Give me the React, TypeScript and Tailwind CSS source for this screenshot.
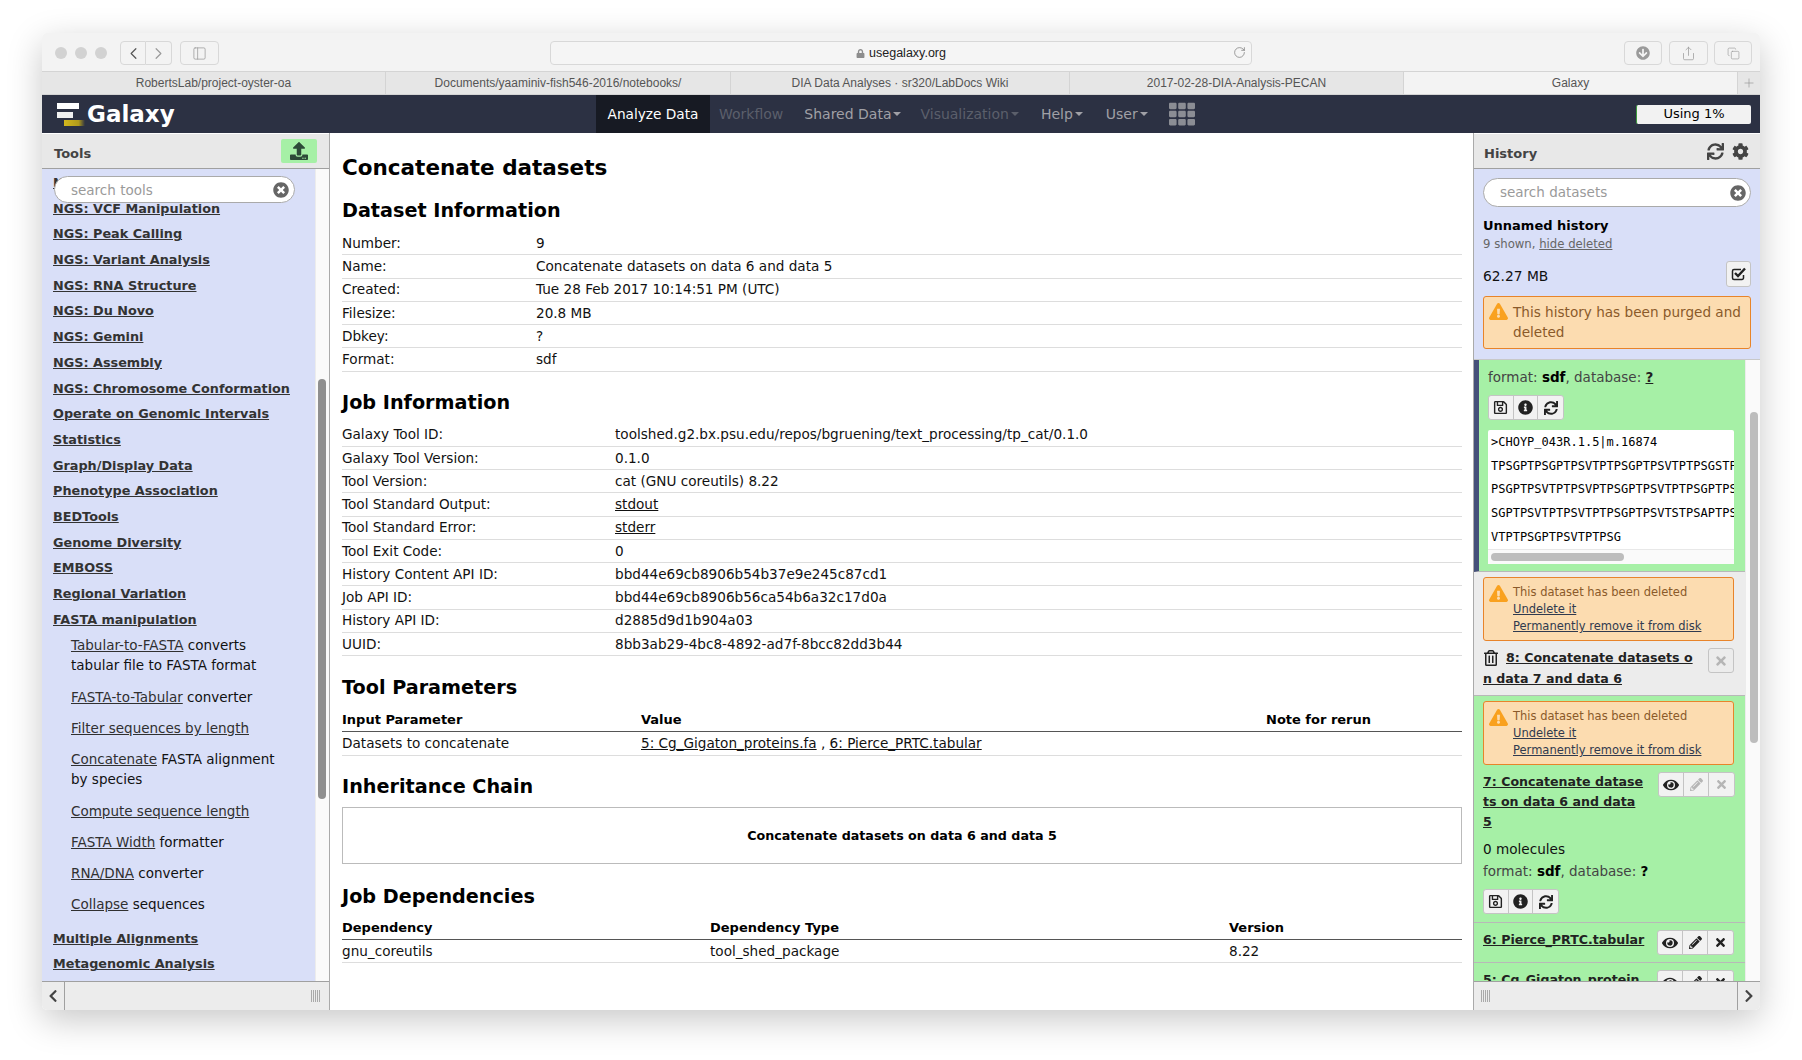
import React from 'react';
import {
  FaCog, FaChevronLeft, FaChevronRight, FaEye, FaExclamationTriangle, FaInfoCircle, FaLock,
  FaPencilAlt, FaRegSave, FaRegTrashAlt, FaSync, FaTh, FaTimes, FaTimesCircle,
  FaArrowCircleDown, FaUpload,
} from 'react-icons/fa';
import { ChevronLeft, ChevronRight, Copy, PanelLeft, Plus, RotateCw, Share } from 'lucide-react';

const sections = [
  'NGS: SAM Tools', 'NGS: VCF Manipulation', 'NGS: Peak Calling', 'NGS: Variant Analysis', 'NGS: RNA Structure',
  'NGS: Du Novo', 'NGS: Gemini', 'NGS: Assembly', 'NGS: Chromosome Conformation', 'Operate on Genomic Intervals',
  'Statistics', 'Graph/Display Data', 'Phenotype Association', 'BEDTools', 'Genome Diversity', 'EMBOSS',
  'Regional Variation', 'FASTA manipulation',
];

const fastaTools = [
  ['Tabular-to-FASTA', ' converts tabular file to FASTA format'],
  ['FASTA-to-Tabular', ' converter'],
  ['Filter sequences by length', ''],
  ['Concatenate', ' FASTA alignment by species'],
  ['Compute sequence length', ''],
  ['FASTA Width', ' formatter'],
  ['RNA/DNA', ' converter'],
  ['Collapse', ' sequences'],
];

const tabs = [
  { label: 'RobertsLab/project-oyster-oa', w: 'w-[344px]' },
  { label: 'Documents/yaaminiv-fish546-2016/notebooks/', w: 'w-[345px]' },
  { label: 'DIA Data Analyses · sr320/LabDocs Wiki', w: 'w-[339px]' },
  { label: '2017-02-28-DIA-Analysis-PECAN', w: 'w-[334px]' },
];

const datasetInfo = [
  ['Number:', '9'],
  ['Name:', 'Concatenate datasets on data 6 and data 5'],
  ['Created:', 'Tue 28 Feb 2017 10:14:51 PM (UTC)'],
  ['Filesize:', '20.8 MB'],
  ['Dbkey:', '?'],
  ['Format:', 'sdf'],
];

const jobInfo = [
  ['Galaxy Tool ID:', 'toolshed.g2.bx.psu.edu/repos/bgruening/text_processing/tp_cat/0.1.0'],
  ['Galaxy Tool Version:', '0.1.0'],
  ['Tool Version:', 'cat (GNU coreutils) 8.22'],
  ['Tool Standard Output:', 'stdout'],
  ['Tool Standard Error:', 'stderr'],
  ['Tool Exit Code:', '0'],
  ['History Content API ID:', 'bbd44e69cb8906b54b37e9e245c87cd1'],
  ['Job API ID:', 'bbd44e69cb8906b56ca54b6a32c17d0a'],
  ['History API ID:', 'd2885d9d1b904a03'],
  ['UUID:', '8bb3ab29-4bc8-4892-ad7f-8bcc82dd3b44'],
];

const sequence = [
  '>CHOYP_043R.1.5|m.16874',
  'TPSGPTPSGPTPSVTPTPSGPTPSVTPTPSGSTPSGPTPS',
  'PSGPTPSVTPTPSVPTPSGPTPSVTPTPSGPTPSVTPTPS',
  'SGPTPSVTPTPSVTPTPSGPTPSVTSTPSAPTPSGPTPSV',
  'VTPTPSGPTPSVTPTPSG',
];

const BarButton = ({ className, children }: { className: string; children?: React.ReactNode }) => (
  <div className={`h-[24px] flex items-center justify-center border border-[#d8d8d8] rounded-[4px] text-[#9a9a9a] ${className}`}>
    {children}
  </div>
);

const DeletedWarning = () => (
  <div className="mx-[9px] w-[251px] h-[64px] flex gap-[5px] border border-[#e8842a] rounded-[3px] bg-[#fcdcb0] pl-[5px] pt-[6px] text-[11.5px] leading-[17px] text-[#8a5a2a]">
    <FaExclamationTriangle className="w-[19px] h-[19px] text-[#f9a11f] shrink-0" />
    <div>
      <div>This dataset has been deleted</div>
      <div className="underline text-[#303a4f]">Undelete it</div>
      <div className="underline text-[#303a4f]">Permanently remove it from disk</div>
    </div>
  </div>
);

const IconGroup = ({ children }: { children: React.ReactNode }) => (
  <div className="flex h-[25px] rounded-[3px] border border-[#c4c4c4] bg-[#f2f2f2] divide-x divide-[#c4c4c4] text-[#222222]">
    {children}
  </div>
);

const IconCell = ({ children, muted }: { children: React.ReactNode; muted?: boolean }) => (
  <div className={`w-[25px] flex items-center justify-center ${muted ? 'text-[#b5b5b5]' : ''}`}>{children}</div>
);

const InfoRow = ({ label, value, labelW }: { label: string; value: string; labelW: string }) => (
  <div className="flex h-[23.25px] items-center border-b border-[#dddddd]">
    <div className={`${labelW} shrink-0`}>{label}</div>
    <div className={value === 'stdout' || value === 'stderr' ? 'underline' : ''}>{value}</div>
  </div>
);

const Heading = ({ children, className }: { children: React.ReactNode; className: string }) => (
  <h2 className={`text-[19.2px] leading-[26px] font-bold text-black ${className}`}>{children}</h2>
);

const Caret = ({ className }: { className: string }) => (
  <i className={`ml-[2px] border-x-[4px] border-x-transparent border-t-[4px] ${className}`} />
);

export default function App() {
  return (
    <div className="w-[1802px] h-[1060px] bg-white pt-[33px] px-[42px] overflow-hidden font-['DejaVu_Sans',sans-serif] text-[13.6px] text-[#111111]">
      <div className="w-[1718px] h-[977px] flex flex-col rounded-[5px] overflow-hidden shadow-[0_10px_35px_rgba(0,0,0,0.22)]">
        {/* safari chrome */}
        <div className="h-[39px] shrink-0 flex items-center bg-[#f3f3f3] border-b border-[#d4d4d4] pl-[13px] pt-[2px]">
          <div className="flex gap-[8px]">
            <div className="w-[12px] h-[12px] rounded-full bg-[#d2d2d2]" />
            <div className="w-[12px] h-[12px] rounded-full bg-[#d2d2d2]" />
            <div className="w-[12px] h-[12px] rounded-full bg-[#d2d2d2]" />
          </div>
          <BarButton className="w-[26px] ml-[13px] rounded-r-none text-[#555555]"><ChevronLeft size={19} strokeWidth={1.5} /></BarButton>
          <BarButton className="w-[26px] rounded-l-none border-l-0"><ChevronRight size={19} strokeWidth={1.5} /></BarButton>
          <BarButton className="w-[39px] ml-[8px]"><PanelLeft size={15} strokeWidth={1.2} /></BarButton>
          <div className="relative w-[702px] h-[24px] ml-[331px] flex items-center justify-center border border-[#d8d8d8] rounded-[4px] bg-[#f5f5f5] font-['Liberation_Sans',sans-serif] text-[12.5px] text-[#222222]">
            <FaLock className="w-[9px] h-[9px] mr-[4px] text-[#8d8d8d]" />
            usegalaxy.org
            <RotateCw size={13} strokeWidth={1.3} className="absolute right-[5px] top-[4px] text-[#777777]" />
          </div>
          <BarButton className="w-[38px] ml-[372px]"><FaArrowCircleDown className="w-[14px] h-[14px]" /></BarButton>
          <BarButton className="w-[39px] ml-[7px]"><Share size={15} strokeWidth={1.2} /></BarButton>
          <BarButton className="w-[38px] ml-[6px]"><Copy size={13} strokeWidth={1.2} /></BarButton>
        </div>
        <div className="h-[23px] shrink-0 flex bg-[#e6e6e6] border-b border-[#d4d4d4] font-['Liberation_Sans',sans-serif] text-[12px] text-[#555555]">
          {tabs.map((t) => (
            <div key={t.label} className={`${t.w} flex items-center justify-center border-r border-[#d4d4d4]`}>{t.label}</div>
          ))}
          <div className="w-[333px] flex items-center justify-center bg-[#f3f3f3]">Galaxy</div>
          <div className="flex-1 flex items-center justify-center border-l border-[#d4d4d4] text-[#8a8a8a]"><Plus size={14} strokeWidth={1} /></div>
        </div>

        {/* galaxy masthead */}
        <div className="h-[38px] shrink-0 flex items-center bg-[#2c3143] text-[14px]">
          <svg width="30" height="26" viewBox="0 0 30 26" className="ml-[15px]">
            <defs>
              <linearGradient id="logoGold" x1="0" x2="1" y1="0" y2="0">
                <stop offset="0" stopColor="#d4b81c" />
                <stop offset="0.7" stopColor="#b09a1c" />
                <stop offset="1" stopColor="#2c3143" />
              </linearGradient>
            </defs>
            <rect x="0" y="2" width="22" height="6" fill="#ffffff" />
            <rect x="0" y="11" width="16" height="6" fill="#f0f0f0" />
            <rect x="7" y="19" width="21" height="6" fill="url(#logoGold)" />
          </svg>
          <span className="w-[509px] text-[23px] leading-none font-bold text-white">Galaxy</span>
          <div className="w-[114px] h-full flex items-center justify-center bg-[#171a23] text-[13.7px] text-white">Analyze Data</div>
          <span className="ml-[9px] text-[#5b5f6b]">Workflow</span>
          <span className="ml-[21px] text-[#a0a0a6] flex items-center">Shared Data<Caret className="border-t-[#a0a0a6]" /></span>
          <span className="ml-[19px] text-[#5b5f6b] flex items-center">Visualization<Caret className="border-t-[#5b5f6b]" /></span>
          <span className="ml-[22px] text-[#a0a0a6] flex items-center">Help<Caret className="border-t-[#a0a0a6]" /></span>
          <span className="ml-[23px] text-[#a0a0a6] flex items-center">User<Caret className="border-t-[#a0a0a6]" /></span>
          <FaTh className="ml-[21px] w-[26px] h-[26px] text-[#8b8d94]" />
          <div className="ml-auto mr-[9px] w-[115px] h-[19px] flex items-center justify-center bg-[#f2f2f2] border-l border-l-[#3c9a3c] rounded-[2px] text-[13px] text-black">Using 1%</div>
        </div>

        {/* three panels */}
        <div className="flex-1 min-h-0 flex">
          {/* tools */}
          <div className="w-[288px] shrink-0 flex flex-col border-r border-[#aaaaaa]">
            <div className="h-[36px] shrink-0 flex items-center justify-between bg-[#e8e8e8] border-t border-t-white border-b border-b-[#a0a0a0] pl-[12px] pr-[12px] text-[13px]">
              <span className="font-bold text-[#444444] pt-[5px]">Tools</span>
              <div className="w-[36px] h-[24px] flex items-center justify-center rounded-[2px] bg-[#a6f0a6] text-[#2d4a38]">
                <FaUpload className="w-[18px] h-[18px]" />
              </div>
            </div>
            <div className="relative flex-1 min-h-0 flex overflow-hidden">
              <div className="w-[273px] bg-[#d9dff8] pl-[11px] pt-[1px] overflow-hidden">
                {sections.map((s) => (
                  <div key={s} className="h-[25.7px] leading-[25px] text-[12.8px] font-bold underline text-[#333333] whitespace-nowrap">{s}</div>
                ))}
                <div className="pl-[18px] pr-[30px] pt-[3px] text-[13.5px]">
                  {fastaTools.map(([a, b]) => (
                    <div key={a} className="leading-[20px] mb-[11.3px] text-[#111111]"><span className="underline text-[#303030]">{a}</span>{b}</div>
                  ))}
                </div>
                <div className="h-[25.7px] leading-[25px] text-[12.8px] font-bold underline text-[#333333]">Multiple Alignments</div>
                <div className="h-[25.7px] leading-[25px] text-[12.8px] font-bold underline text-[#333333]">Metagenomic Analysis</div>
              </div>
              <div className="flex-1 bg-[#fafafa] border-l border-[#ececec] pt-[210px] pl-[2px]">
                <div className="w-[8px] h-[420px] rounded-[4px] bg-[#8f8f8f]" />
              </div>
              <div className="absolute left-[12px] top-[7px] w-[241px] h-[27px] flex items-center justify-between rounded-[14px] border border-[#aaaaaa] bg-white pl-[16px] pr-[5px] text-[13.5px] text-[#9a9a9a]">
                <span className="pt-[1px]">search tools</span>
                <FaTimesCircle className="w-[16px] h-[16px] text-[#666666]" />
              </div>
            </div>
            <div className="h-[29px] shrink-0 flex items-center bg-[#ececec] border-t border-[#a0a0a0]">
              <div className="w-[23px] h-full flex items-center justify-center border-r border-[#a0a0a0] text-[#444444]"><FaChevronLeft className="w-[14px] h-[14px]" /></div>
              <div className="ml-auto mr-[9px] w-[9px] h-[12px] bg-[repeating-linear-gradient(90deg,#aaaaaa_0,#aaaaaa_1px,transparent_1px,transparent_2px)]" />
            </div>
          </div>

          {/* center */}
          <div className="flex-1 min-w-0 bg-white pl-[12px] pr-[11px] pt-[19px] overflow-hidden">
            <h1 className="text-[21.5px] leading-[32px] font-bold text-black">Concatenate datasets</h1>
            <Heading className="mt-[14px]">Dataset Information</Heading>
            <div className="mt-[8px]">
              {datasetInfo.map(([k, v]) => <InfoRow key={k} label={k} value={v} labelW="w-[194px]" />)}
            </div>
            <Heading className="mt-[18px]">Job Information</Heading>
            <div className="mt-[8px]">
              {jobInfo.map(([k, v]) => <InfoRow key={k} label={k} value={v} labelW="w-[273px]" />)}
            </div>
            <Heading className="mt-[19px]">Tool Parameters</Heading>
            <div className="mt-[8px]">
              <div className="flex h-[23.25px] items-center border-b border-[#555555] text-[13px] font-bold text-black">
                <div className="w-[299px]">Input Parameter</div>
                <div className="w-[625px]">Value</div>
                <div>Note for rerun</div>
              </div>
              <div className="flex h-[23.25px] items-center border-b border-[#dddddd]">
                <div className="w-[299px]">Datasets to concatenate</div>
                <div><span className="underline">5: Cg_Gigaton_proteins.fa</span> , <span className="underline">6: Pierce_PRTC.tabular</span></div>
              </div>
            </div>
            <Heading className="mt-[18px]">Inheritance Chain</Heading>
            <div className="mt-[7px] h-[57px] flex items-center justify-center border border-[#bbbbbb] pt-[1px] text-[12.7px] font-bold text-black">
              Concatenate datasets on data 6 and data 5
            </div>
            <Heading className="mt-[20px]">Job Dependencies</Heading>
            <div className="mt-[7px]">
              <div className="flex h-[23.25px] items-center border-b border-[#555555] text-[13px] font-bold text-black">
                <div className="w-[368px]">Dependency</div>
                <div className="w-[519px]">Dependency Type</div>
                <div>Version</div>
              </div>
              <div className="flex h-[23.25px] items-center border-b border-[#dddddd]">
                <div className="w-[368px]">gnu_coreutils</div>
                <div className="w-[519px]">tool_shed_package</div>
                <div>8.22</div>
              </div>
            </div>
          </div>

          {/* history */}
          <div className="w-[287px] shrink-0 flex flex-col border-l border-[#aaaaaa]">
            <div className="h-[36px] shrink-0 flex items-center bg-[#e8e8e8] border-t border-t-white border-b border-b-[#a0a0a0] pl-[10px] pr-[11px] text-[13px]">
              <span className="font-bold text-[#444444] pt-[5px]">History</span>
              <FaSync className="ml-auto w-[17px] h-[17px] text-[#444444]" />
              <FaCog className="ml-[8px] w-[17px] h-[17px] text-[#444444]" />
            </div>
            <div className="h-[190px] shrink-0 bg-[#d9dff8] pl-[9px] pr-[9px] pt-[9px]">
              <div className="h-[29px] flex items-center justify-between rounded-[15px] border border-[#aaaaaa] bg-white pl-[16px] pr-[4px] text-[13.5px] text-[#9a9a9a]">
                search datasets
                <FaTimesCircle className="w-[16px] h-[16px] text-[#666666]" />
              </div>
              <div className="mt-[10px] text-[13px] font-bold leading-[18px] text-black">Unnamed history</div>
              <div className="text-[11.7px] leading-[18px] text-[#666666]">9 shown, <span className="underline">hide deleted</span></div>
              <div className="mt-[8px] h-[26px] flex items-center justify-between">
                <span className="pt-[5px] text-[13.8px]">62.27 MB</span>
                <div className="w-[25px] h-[26px] flex items-center justify-center rounded-[3px] border border-[#c4c4c4] bg-[#f2f2f2] text-[#222222]">
                  <svg width="16" height="16" viewBox="0 0 16 16" fill="none" stroke="currentColor">
                    <path d="M12.5 9v3a1.5 1.5 0 0 1-1.5 1.5H3A1.5 1.5 0 0 1 1.5 12V5A1.5 1.5 0 0 1 3 3.500h7" strokeWidth="1.5" />
                    <path d="M4 7l3 3 7-7.500" strokeWidth="2.400" />
                  </svg>
                </div>
              </div>
              <div className="mt-[9px] h-[53px] flex gap-[5px] rounded-[3px] border border-[#e8842a] bg-[#fcdcb0] pl-[5px] pt-[5px] leading-[20px] text-[#8a5a2a]">
                <FaExclamationTriangle className="w-[19px] h-[19px] text-[#f9a11f] shrink-0" />
                <div>This history has been purged and deleted</div>
              </div>
            </div>
            <div className="flex-1 min-h-0 flex overflow-hidden border-t border-[#c8c8c8]">
              <div className="w-[271px] shrink-0 overflow-hidden">
                <div className="h-[212px] bg-[#a6f0a6] border-l-[5px] border-l-[#45507a] border-b border-b-[#b8b8b8] pl-[9px] pt-[8px]">
                  <div className="leading-[18px] text-[13.5px] text-[#444444]">format: <b className="text-black">sdf</b>, database: <span className="underline font-bold text-[#222222]">?</span></div>
                  <div className="mt-[9px] w-[76px]">
                    <IconGroup>
                      <IconCell><FaRegSave className="w-[15px] h-[15px]" /></IconCell>
                      <IconCell><FaInfoCircle className="w-[15px] h-[15px]" /></IconCell>
                      <IconCell><FaSync className="w-[14px] h-[14px]" /></IconCell>
                    </IconGroup>
                  </div>
                  <div className="mt-[10px] w-[246px] h-[134px] bg-white overflow-hidden flex flex-col rounded-t-[2px]">
                    <div className="h-[119px] pl-[3px] pt-[1px] overflow-hidden font-['DejaVu_Sans_Mono',monospace] text-[12px] leading-[23.7px] text-black whitespace-nowrap">
                      {sequence.map((l) => <div key={l}>{l}</div>)}
                    </div>
                    <div className="h-[15px] bg-[#fafafa] border-t border-[#e8e8e8] pl-[3px] pt-[3px]">
                      <div className="w-[133px] h-[8px] rounded-[4px] bg-[#bdbdbd]" />
                    </div>
                  </div>
                </div>
                <div className="h-[124px] bg-[#ececec] border-b border-[#b8b8b8] pt-[5px]">
                  <DeletedWarning />
                  <div className="flex mt-[7px] pl-[9px]">
                    <div className="w-[217px] font-bold underline leading-[20.5px] text-[#222222] text-[12.6px] whitespace-nowrap">
                      <FaRegTrashAlt className="inline w-[16px] h-[16px] mr-[7px] mb-[2px]" />8: Concatenate datasets o<br />n data 7 and data 6
                    </div>
                    <div className="ml-[8px] w-[26px] h-[25px] flex items-center justify-center rounded-[3px] border border-[#c4c4c4] text-[#b5b5b5]"><FaTimes className="w-[14px] h-[14px]" /></div>
                  </div>
                </div>
                <div className="h-[227px] bg-[#a6f0a6] border-b border-[#b8b8b8] pt-[5px]">
                  <DeletedWarning />
                  <div className="flex mt-[7px] pl-[9px]">
                    <div className="w-[160px] font-bold underline leading-[20px] text-[#222222] text-[12.6px] whitespace-nowrap">7: Concatenate datase<br />ts on data 6 and data <br />5</div>
                    <div className="ml-[15px]">
                      <IconGroup>
                        <IconCell><FaEye className="w-[16px] h-[16px]" /></IconCell>
                        <IconCell muted><FaPencilAlt className="w-[13px] h-[13px]" /></IconCell>
                        <IconCell muted><FaTimes className="w-[13px] h-[13px]" /></IconCell>
                      </IconGroup>
                    </div>
                  </div>
                  <div className="mt-[7px] pl-[9px] leading-[20px]">0 molecules</div>
                  <div className="mt-[2px] pl-[9px] leading-[20px] text-[13.5px] text-[#444444]">format: <b className="text-black">sdf</b>, database: <b className="text-black">?</b></div>
                  <div className="mt-[8px] ml-[9px] w-[76px]">
                    <IconGroup>
                      <IconCell><FaRegSave className="w-[15px] h-[15px]" /></IconCell>
                      <IconCell><FaInfoCircle className="w-[15px] h-[15px]" /></IconCell>
                      <IconCell><FaSync className="w-[14px] h-[14px]" /></IconCell>
                    </IconGroup>
                  </div>
                </div>
                <div className="h-[40px] flex justify-between bg-[#a6f0a6] border-b border-[#b8b8b8] pl-[9px] pr-[11px] pt-[7px]">
                  <div className="font-bold underline text-[12.6px] leading-[20px] text-[#222222] whitespace-nowrap">6: Pierce_PRTC.tabular</div>
                  <IconGroup>
                    <IconCell><FaEye className="w-[16px] h-[16px]" /></IconCell>
                    <IconCell><FaPencilAlt className="w-[13px] h-[13px]" /></IconCell>
                    <IconCell><FaTimes className="w-[13px] h-[13px]" /></IconCell>
                  </IconGroup>
                </div>
                <div className="h-[60px] flex justify-between bg-[#a6f0a6] pl-[9px] pr-[11px] pt-[7px]">
                  <div className="font-bold underline text-[12.6px] leading-[20px] text-[#222222] whitespace-nowrap">5: Cg_Gigaton_protein</div>
                  <IconGroup>
                    <IconCell><FaEye className="w-[16px] h-[16px]" /></IconCell>
                    <IconCell><FaPencilAlt className="w-[13px] h-[13px]" /></IconCell>
                    <IconCell><FaTimes className="w-[13px] h-[13px]" /></IconCell>
                  </IconGroup>
                </div>
              </div>
              <div className="flex-1 bg-[#fafafa] border-l border-[#ececec] pt-[52px] pl-[4px]">
                <div className="w-[8px] h-[331px] rounded-[4px] bg-[#bdbdbd]" />
              </div>
            </div>
            <div className="h-[29px] shrink-0 flex items-center bg-[#ececec] border-t border-[#a0a0a0]">
              <div className="ml-[7px] w-[9px] h-[12px] bg-[repeating-linear-gradient(90deg,#aaaaaa_0,#aaaaaa_1px,transparent_1px,transparent_2px)]" />
              <div className="ml-auto w-[23px] h-full flex items-center justify-center border-l border-[#a0a0a0] text-[#444444]"><FaChevronRight className="w-[14px] h-[14px]" /></div>
            </div>
          </div>
        </div>
      </div>
    </div>
  );
}
